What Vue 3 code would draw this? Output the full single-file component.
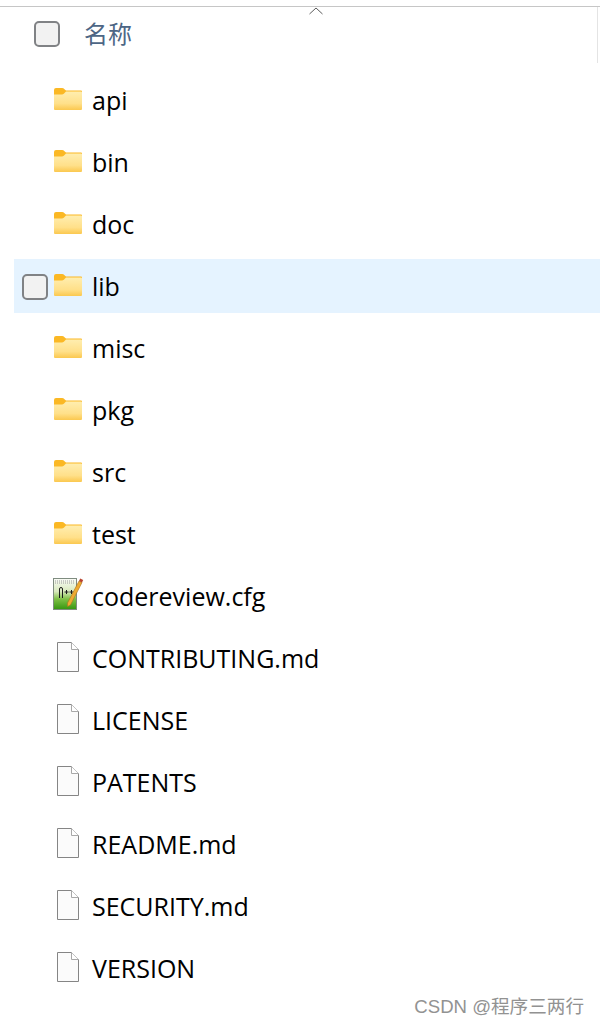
<template>
  <div class="explorer">
    <span class="sort-caret">
      <svg width="14" height="8" viewBox="0 0 14 8"><path d="M0.5 7 L7 1 L13.5 7" fill="none" stroke="#5c5c5c" stroke-width="1"/></svg>
    </span>
    <div class="list-header">
      <span class="check"></span>
      <span class="col-name">名称</span>
    </div>
    <div class="file-list">
      <div v-for="item in items" :key="item.name" class="file-row" :class="{ hover: item.name === 'lib' }">
        <span v-if="item.name === 'lib'" class="check row-check"></span>
        <span class="file-icon" :class="item.type">
          <svg v-if="item.type === 'folder'" width="30" height="24" viewBox="0 0 30 24">
            <defs>
              <linearGradient id="folderFill" x1="0" y1="0" x2="0" y2="1">
                <stop offset="0" stop-color="#ffeeb0" />
                <stop offset="0.65" stop-color="#ffe08a" />
                <stop offset="1" stop-color="#fbc84f" />
              </linearGradient>
            </defs>
            <path d="M1 3 Q1 1 3 1 H9 Q10.5 1 11.5 2.2 L13 3.6 H28 Q29 3.6 29 4.6 V9 H1 Z" fill="#fbb824" />
            <path d="M1 7.6 H9 Q10 7.6 10.8 6.8 L13 4.4 H28 Q29 4.4 29 5.4 V22 Q29 23 28 23 H2 Q1 23 1 22 Z" fill="url(#folderFill)" />
          </svg>
          <svg v-else-if="item.type === 'code'" width="32" height="34" viewBox="0 0 32 34">
            <defs>
              <linearGradient id="codeFill" x1="0" y1="0" x2="0" y2="1">
                <stop offset="0" stop-color="#fbfcf8" />
                <stop offset="0.42" stop-color="#d8e9bc" />
                <stop offset="0.66" stop-color="#7fc046" />
                <stop offset="1" stop-color="#35960f" />
              </linearGradient>
            </defs>
            <rect x="1.5" y="1.5" width="23" height="31" fill="url(#codeFill)" stroke="#7f8c80" />
            <path d="M3 4 H23 M3 6 H23" stroke="#9a9a9a" stroke-dasharray="1 1" />
            <path d="M7.5 21 V12 Q7.5 10.5 9 10.5 Q10.5 10.5 10.5 12 V21 M12.5 15 H16.5 M14.5 13 V17 M17.5 15 H21.5 M19.5 13 V17" fill="none" stroke="#1c1c1c" stroke-width="1" />
            <path d="M15.5 26 L27 4 L30 5.5 L18.5 28 L15.5 29.5 Z" fill="#eeaa30" stroke="#a9701c" stroke-width="0.6" />
            <path d="M27 4 L28.2 1.4 L31.2 3 L30 5.5 Z" fill="#b8432f" />
          </svg>
          <svg v-else width="24" height="32" viewBox="0 0 24 32">
            <path d="M1.5 1.5 H15.5 L22.5 8.5 V30.5 H1.5 Z" fill="#fbfbfb" stroke="#858585" />
            <path d="M15.5 1.5 V8.5 H22.5" fill="#fff" stroke="#a8a8a8" />
          </svg>
        </span>
        <span class="file-name">{{ item.name }}</span>
      </div>
    </div>
    <span class="watermark">CSDN @程序三两行</span>
  </div>
</template>

<script setup>
const items = [
  { name: 'api', type: 'folder' },
  { name: 'bin', type: 'folder' },
  { name: 'doc', type: 'folder' },
  { name: 'lib', type: 'folder' },
  { name: 'misc', type: 'folder' },
  { name: 'pkg', type: 'folder' },
  { name: 'src', type: 'folder' },
  { name: 'test', type: 'folder' },
  { name: 'codereview.cfg', type: 'code' },
  { name: 'CONTRIBUTING.md', type: 'file' },
  { name: 'LICENSE', type: 'file' },
  { name: 'PATENTS', type: 'file' },
  { name: 'README.md', type: 'file' },
  { name: 'SECURITY.md', type: 'file' },
  { name: 'VERSION', type: 'file' }
]
</script>

<style>
html,
body {
  background: #fff;
  overflow: hidden;
}
</style>

<style scoped>
.explorer {
  position: relative;
  width: 600px;
  height: 1026px;
  box-sizing: border-box;
  padding-top: 6px;
  background: #fff;
  overflow: hidden;
  font-family: "Open Sans", "Noto Sans CJK SC", sans-serif;
}

.explorer::after {
  content: "";
  position: absolute;
  top: 7px;
  right: 2px;
  width: 1px;
  height: 56px;
  background: #e4e4e4;
}

.sort-caret {
  position: absolute;
  top: 7px;
  left: 309px;
  line-height: 0;
}

.list-header {
  display: flex;
  align-items: center;
  height: 54px;
  padding-left: 34px;
  border-top: 1px solid #c6c6c6;
  box-sizing: border-box;
}

.check {
  width: 26px;
  height: 26px;
  box-sizing: border-box;
  border: 2px solid #808285;
  border-radius: 5px;
  background: #f2f2f2;
}

.col-name {
  margin-left: 24px;
  margin-bottom: 2px;
  font-size: 24px;
  color: #4d6685;
  font-family: "Noto Sans CJK SC", sans-serif;
}

.file-list {
  display: flex;
  flex-direction: column;
  gap: 8px;
  margin-top: 13px;
  margin-left: 14px;
}

.file-row {
  position: relative;
  display: flex;
  align-items: center;
  height: 54px;
}

.file-row.hover {
  background: #e5f3ff;
}

.row-check {
  position: absolute;
  left: 8px;
  top: 15px;
}

.file-icon {
  display: flex;
  justify-content: center;
  align-items: center;
  width: 32px;
  margin-left: 38px;
  line-height: 0;
}

/* folder and file glyphs sit a little above the text centre */
.file-icon.folder {
  margin-bottom: 2px;
}

.file-icon.file {
  margin-bottom: 2px;
}

.file-icon.code {
  margin-bottom: 4px;
}

.file-name {
  margin-left: 8px;
  font-size: 25px;
  color: #000;
}

.watermark {
  position: absolute;
  right: 16px;
  bottom: 8px;
  font-size: 18.6px;
  color: #929292;
  font-family: "Liberation Sans", "Noto Sans CJK SC", sans-serif;
}
</style>
